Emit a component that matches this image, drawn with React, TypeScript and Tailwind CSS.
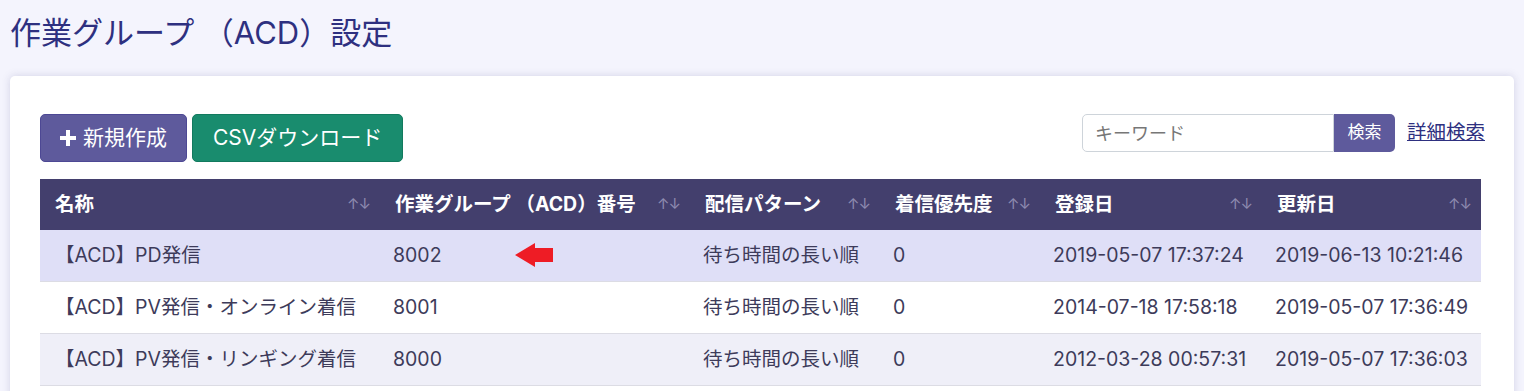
import React from 'react'

const font = { fontFamily: '"Inter", "Noto Sans CJK JP", sans-serif' }

const columns = [
  { label: '名称', width: 'w-[340px]' },
  { label: '作業グループ （ACD）番号', width: 'w-[310px]' },
  { label: '配信パターン', width: 'w-[190px]' },
  { label: '着信優先度', width: 'w-[160px]' },
  { label: '登録日', width: 'w-[222px]' },
  { label: '更新日', width: 'w-[219px]' },
]

const rows = [
  {
    name: '【ACD】PD発信',
    no: '8002',
    pattern: '待ち時間の長い順',
    priority: '0',
    created: '2019-05-07 17:37:24',
    updated: '2019-06-13 10:21:46',
    bg: 'bg-[#dfdff7]',
    arrow: true,
  },
  {
    name: '【ACD】PV発信・オンライン着信',
    no: '8001',
    pattern: '待ち時間の長い順',
    priority: '0',
    created: '2014-07-18 17:58:18',
    updated: '2019-05-07 17:36:49',
    bg: 'bg-white',
    arrow: false,
  },
  {
    name: '【ACD】PV発信・リンギング着信',
    no: '8000',
    pattern: '待ち時間の長い順',
    priority: '0',
    created: '2012-03-28 00:57:31',
    updated: '2019-05-07 17:36:03',
    bg: 'bg-[#efeff8]',
    arrow: false,
  },
]

function RedArrow() {
  return (
    <svg width="40" height="26" viewBox="0 0 40 26" className="ml-[73px]">
      <path d="M0 12 L20 0 L20 5 L38 5 L38 19 L20 19 L20 24 Z" fill="#ee1c25" />
    </svg>
  )
}

export default function App() {
  return (
    <div className="min-h-screen bg-[#f4f4fd] pb-10" style={font}>
      {/* Title */}
      <h1 className="px-[10px] pt-[13px] pb-[23px] text-[31px] leading-[40px] text-[#2e3080]">
        作業グループ （ACD）設定
      </h1>

      {/* Card */}
      <div className="mx-[10px] rounded-[5px] bg-white pt-[38px] pb-10 px-[30px] shadow-[0_0_8px_rgba(60,60,120,0.18)]">
        {/* Toolbar */}
        <div className="flex items-start justify-between">
          <div className="flex gap-[5px]">
            <button className="flex h-[48px] items-center gap-[6px] rounded-[5px] border border-[#4d4894] bg-[#5e5a9c] pl-[18px] pr-[19px] text-[21px] text-white">
              <svg width="18" height="18" viewBox="0 0 18 18">
                <path d="M7 1 h4 v6 h6 v4 h-6 v6 h-4 v-6 h-6 v-4 h6 z" fill="white" />
              </svg>
              新規作成
            </button>
            <button className="h-[48px] rounded-[5px] border border-[#127a5e] bg-[#198c6e] px-[20px] text-[21px] text-white">
              CSVダウンロード
            </button>
          </div>
          <div className="mr-[-1px] flex items-center">
            <div className="flex h-[38px]">
              <input
                placeholder="キーワード"
                className="h-[38px] w-[252px] rounded-l-[5px] border border-[#ced4da] px-[12px] text-[18px] text-[#333] placeholder:text-[#777]"
              />
              <button className="h-[38px] w-[61px] rounded-r-[5px] bg-[#5e5a9c] text-[17px] text-white">検索</button>
            </div>
            <a className="ml-[12px] text-[19.5px] text-[#2e3080] underline">詳細検索</a>
          </div>
        </div>

        {/* Table */}
        <div className="mt-[17px] w-[1441px]">
          <div className="flex h-[51px] items-center bg-[#433f6d] text-white">
            {columns.map((c) => (
              <div key={c.label} className={`${c.width} flex items-center justify-between pl-[15px] pr-[10px]`}>
                <span className="whitespace-pre text-[19.5px] font-bold">{c.label}</span>
                <span className="text-[15px] tracking-[-1px] text-[#8e8bb0]">↑↓</span>
              </div>
            ))}
          </div>
          {rows.map((r) => (
            <div key={r.no} className={`flex h-[52px] items-center border-b border-[#dcdce4] text-[19.5px] text-[#3d3b5a] ${r.bg}`}>
              <div className="w-[340px] pl-[15px]">{r.name}</div>
              <div className="flex w-[310px] items-center pl-[13px]">
                {r.no}
                {r.arrow && <RedArrow />}
              </div>
              <div className="w-[190px] pl-[13px]">{r.pattern}</div>
              <div className="w-[160px] pl-[13px]">{r.priority}</div>
              <div className="w-[222px] pl-[13px]">{r.created}</div>
              <div className="w-[219px] pl-[13px]">{r.updated}</div>
            </div>
          ))}
        </div>
      </div>
    </div>
  )
}
